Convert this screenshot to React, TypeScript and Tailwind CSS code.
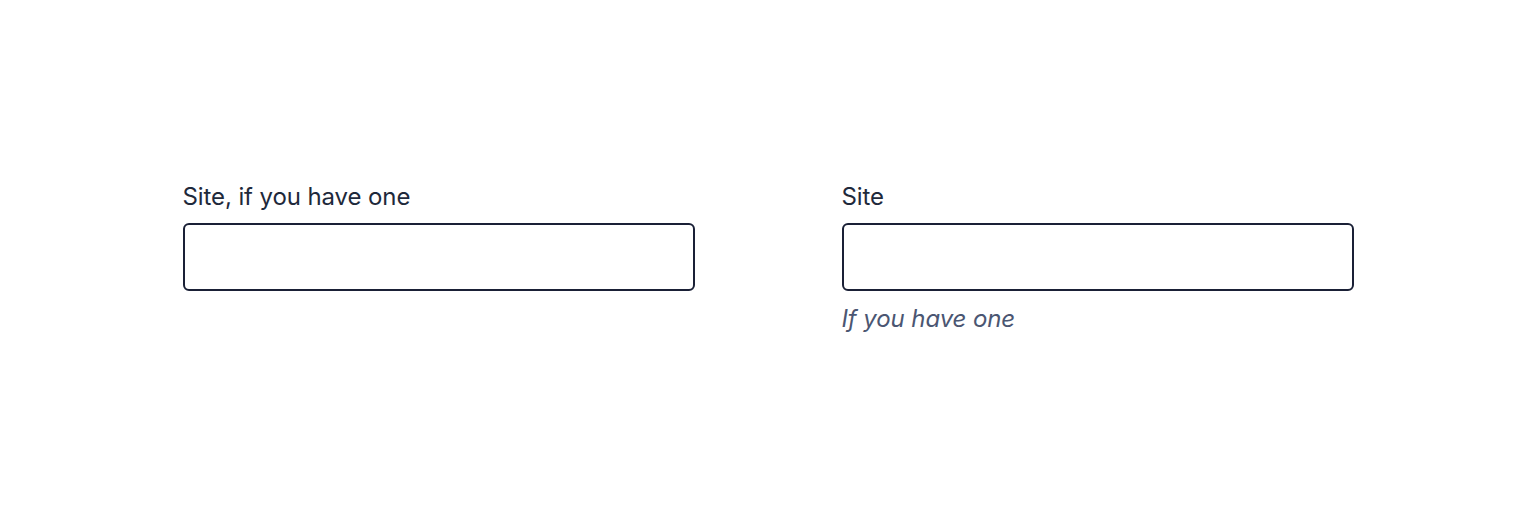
import React from "react";

const Field: React.FC<{ label: string; hint?: string }> = ({ label, hint }) => (
  <div className="flex flex-col">
    <label className="mb-2 text-2xl leading-[36px] tracking-[-0.1px] text-[#1e293b]">{label}</label>
    <input
      type="text"
      className="h-[68px] w-full rounded-md border-2 border-[#1a2036] bg-white px-4 text-2xl outline-none"
    />
    {hint && <p className="mt-3 text-2xl italic tracking-[-0.1px] text-[#4b5672]">{hint}</p>}
  </div>
);

const App: React.FC = () => {
  return (
    <div
      className="flex h-[512px] w-full justify-center bg-white pt-[179px]"
      style={{ fontFamily: "Inter, 'Noto Sans', sans-serif" }}
    >
      <div className="grid grid-cols-[512px_512px] items-start gap-x-[147px]">
        <Field label="Site, if you have one" />
        <Field label="Site" hint="If you have one" />
      </div>
    </div>
  );
};

export default App;
